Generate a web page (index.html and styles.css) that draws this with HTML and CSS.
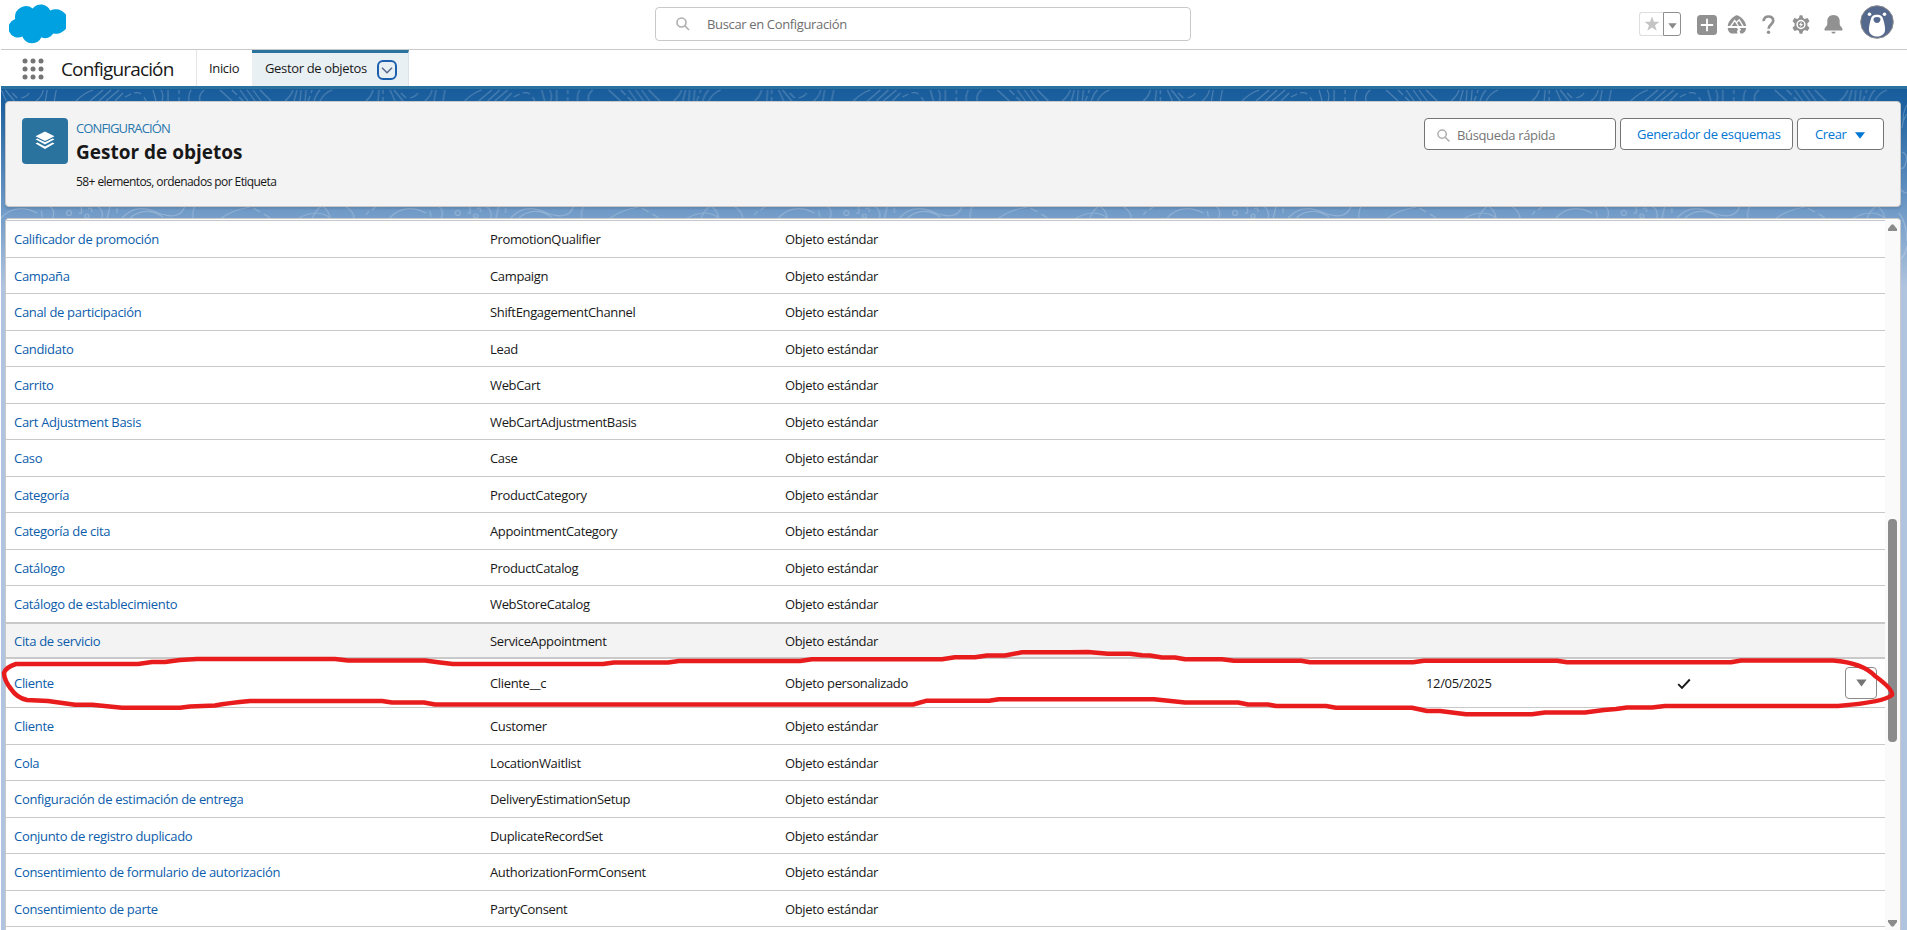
FILE: index.html
```html
<!DOCTYPE html>
<html lang="es">
<head>
<meta charset="utf-8">
<title>Gestor de objetos</title>
<link rel="stylesheet" href="styles.css">
</head>
<body>
<header class="global">
  <svg class="logo" width="57" height="40" viewBox="0 0 57 40"><path fill="#00a1e0" d="M23.7 4.400A10.200 10.200 0 0 1 41.200 6.600A12.300 12.300 0 1 1 44.200 29.600A9 9 0 0 1 32.400 33.300A10.300 10.300 0 0 1 13.400 32.500A9.500 9.500 0 1 1 6.200 15A11 11 0 0 1 23.700 4.400Z"/></svg>
  <div class="search">
    <svg width="14" height="14" viewBox="0 0 14 14" fill="none" stroke="#aeaeae" stroke-width="1.6"><circle cx="5.500" cy="5.500" r="4.500"/><path d="M8.800 8.800L13 13"/></svg>
    <span>Buscar en Configuración</span>
  </div>
  <div class="tools">
    <div class="fav"><span class="star"><svg width="16" height="16" viewBox="0 0 16 16"><path fill="#c4c4c4" d="M8 .5l1.900 5.300h5.600L11 9.200l1.700 5.600L8 11.500l-4.700 3.300L5 9.200.5 5.800h5.600z"/></svg></span><span class="favmenu"><svg width="9" height="6" viewBox="0 0 9 6"><path fill="#8a8a8a" d="M.3.300h8.400L4.500 5.800z"/></svg></span></div>
    <svg class="plus" width="20" height="20" viewBox="0 0 20 20"><rect width="20" height="20" rx="3.500" fill="#919191"/><path d="M10 3.800v12.400M3.800 10h12.400" stroke="#fff" stroke-width="1.800"/></svg>
    <svg class="trail" width="20" height="19" viewBox="0 0 20 19"><path fill="#919191" d="M9.900.2c1.400 0 2.600.9 4.200 2.400 3 2.700 4.700 5.400 5 8.500H.7c.3-3.100 2-5.800 5-8.500C7.300 1.100 8.500.2 9.900.2zM.7 13h8.900l1.800 1.600-1.500 1.400.7 2.600H5.500C2.600 18.600.9 16 .7 13zM12.500 13h6.600c-.2 3-2 5.600-5 5.600h-.6l-.9-2.300 1.500-1.500z"/><path fill="none" stroke="#fff" stroke-width="1.300" d="M3.200 11.800l4.500-6.300 3.600 5.300M9 8l3.200-3.200 4.200 6.800"/></svg>
    <svg class="help" width="13" height="19" viewBox="0 0 13 19"><path fill="none" stroke="#919191" stroke-width="2.700" d="M1.700 6.200C1.500 3 3.700 1.500 6.400 1.500c2.800 0 4.800 1.600 4.800 4.200 0 3.800-4.600 3.700-4.600 8.100"/><circle cx="6.500" cy="17.200" r="1.700" fill="#919191"/></svg>
    <svg class="gear" width="18" height="19" viewBox="0 0 18 19"><path fill="#919191" d="M7.700.3h2.600l.8 2.700 1.600.9 2.900-.9 1.900 3.200-2.100 2.100v2.400l2.100 2.100-1.900 3.200-2.900-.9-1.600.9-.8 2.700H7.700L6.900 16l-1.600-.9-2.900.9-1.900-3.200 2.100-2.100V8.300L.5 6.200 2.400 3l2.900.9L6.900 3z"/><circle cx="9" cy="9.500" r="3.900" fill="none" stroke="#fff" stroke-width="1.500"/><path fill="#fff" d="M9.700 6.400L7 10h1.700l-.6 2.600L11 9.100H9.200z"/></svg>
    <svg class="bell" width="19" height="19" viewBox="0 0 19 19"><path fill="#919191" d="M9.500 0c4 0 6.200 2.800 6.200 6.300v2.400c0 2.600 2.900 3.700 2.900 6.100 0 .5-.3.700-.8.700H1.200c-.5 0-.8-.2-.8-.7 0-2.400 2.900-3.500 2.900-6.100V6.300C3.300 2.800 5.500 0 9.500 0zM7.300 16.700h4.400c-.3 1.200-1.200 1.900-2.200 1.900s-1.900-.7-2.200-1.900z"/></svg>
    <svg class="avatar" width="34" height="34" viewBox="0 0 34 34"><circle cx="17" cy="17" r="16.300" fill="#54698d" stroke="#8c8c8c" stroke-width="1"/><path fill="#fff" d="M11.600 12.300c1-2 3-2.500 5.400-2.500s4.400.5 5.400 2.500c1.200 3 3 9.500 2.600 13.200-.5 4-4.500 6-8 6s-7.500-2-8-6c-.4-3.700 1.400-10.200 2.600-13.200z"/><circle cx="9.500" cy="9.200" r="1.800" fill="#fff"/><circle cx="24.500" cy="9.200" r="1.800" fill="#fff"/><path fill="#54698d" d="M13.500 14.500c0-1.800 1.600-2.500 3.500-2.500s3.500.7 3.500 2.500-1.700 3.600-3.500 3.600-3.500-1.800-3.500-3.600z"/></svg>
  </div>
</header>
<nav class="context">
  <svg class="waffle" width="22" height="22" viewBox="0 0 22 22" fill="#747474"><circle cx="3" cy="3" r="2.500"/><circle cx="11" cy="3" r="2.500"/><circle cx="19" cy="3" r="2.500"/><circle cx="3" cy="11" r="2.500"/><circle cx="11" cy="11" r="2.500"/><circle cx="19" cy="11" r="2.500"/><circle cx="3" cy="19" r="2.500"/><circle cx="11" cy="19" r="2.500"/><circle cx="19" cy="19" r="2.500"/></svg>
  <span class="app">Configuración</span>
  <a class="tab home">Inicio</a>
  <a class="tab active"><span>Gestor de objetos</span><i class="chev"><svg width="12" height="7" viewBox="0 0 12 7"><path d="M1 .8l5 5 5-5" fill="none" stroke="#54698d" stroke-width="1.500"/></svg></i></a>
</nav>
<main class="stage">
  <svg class="topo" width="1906" height="200" fill="none" stroke="#fff" stroke-opacity=".22" stroke-width="1.200">
    <defs>
      <pattern id="contours" x="59" y="0" width="388.700" height="200" patternUnits="userSpaceOnUse">
        <path d="M16 12Q24 4 33 1M30 12L43 1M39 12L51 1M46 12L59 1M55 12L63 4M65 8l6-3M74 4q5-1 7 1M84 8l2 4M93 1l3 11M101 1q3 5 1 11M108 1v11M119 1v4M119 8v4M131 1q-3 5-2 11M144 1q-6 5-4 11M160 1l12 11M172 1l5 5M179 8l4 4M180 1l8 11M187 1l8 11M193 1l8 11M200 1l11 11M233 1q-2 6-8 11M237 1l-3 11M241 1l-1 11M246 1l-1 11M252 1l-1 3M250 7l-2 5M260 1q-4 4-6 11M272 1q-8 3-12 11M313 1q-2 7-7 11M319 1l-1 11M323 1v4M323 8v4M330 1l5 11M334 1l9 11M341 4l5 5M350 9q5-1 8-5M372 1q-1 6-7 11M376 1l-2 11M385 1q-1 5-2 11"/>
        <path d="M37 117q7 4 5 13M50 117l-3 13M57 119v5M62 129Q76 113 98 124Q120 132 125 117M69 130Q84 116 103 128M135 117q-3 6-2 13M160 130Q172 121 190 118M193 119l7 4M204 125l6 4M237 130Q258 118 271 130M252 130q4-10 10-13q7 4 8 13M285 117q9 5 9 13M306 126l3-4M312 121l5-4M329 130Q343 113 366 124M370 122l1 6M21 118q2 8-2 6M28 120q4-3 4 3M378 117q7 4 3 13"/><circle cx="9" cy="124" r="2.500"/><circle cx="27" cy="127" r="2"/>
      </pattern>
    </defs>
    <rect width="1898" height="200" fill="url(#contours)" stroke="none"/>
    <path d="M1906 16q-4 6-4 16M1906 25q-4 5-5 14M1901 63q6 2 4 10t-5 6M1900 101q3 3 6 3M1898 124q7 8 8 28M1906 157q-1 8-6 13"/>
  </svg>
  <section class="pagehead">
    <div class="badge"><svg width="22" height="22" viewBox="0 0 22 22" fill="#fff"><path d="M11 1.500l9.500 4.800L11 11 1.500 6.300z"/><path d="M1.500 9.300l1.900-.9L11 12.200l7.600-3.800 1.900.9L11 14.600zM1.500 13.500l1.900-.9L11 16.400l7.600-3.800 1.900.9L11 18.900z"/></svg></div>
    <div class="titles"><p class="kicker">CONFIGURACIÓN</p><h1>Gestor de objetos</h1><p class="meta">58+ elementos, ordenados por Etiqueta</p></div>
    <div class="actions">
      <div class="quick"><svg width="13" height="13" viewBox="0 0 14 14" fill="none" stroke="#aeaeae" stroke-width="1.600"><circle cx="5.500" cy="5.500" r="4.500"/><path d="M8.800 8.800L13.300 13.300"/></svg><span>Búsqueda rápida</span></div>
      <a class="btn schema">Generador de esquemas</a>
      <a class="btn create"><span>Crear</span><svg width="10" height="7" viewBox="0 0 10 7"><path fill="#0176d3" d="M0 .3h10L5 6.800z"/></svg></a>
    </div>
  </section>
  <section class="list">
    <div class="rows">
      <div class="row"><a>Calificador de promoción</a><span>PromotionQualifier</span><span>Objeto estándar</span></div>
      <div class="row"><a>Campaña</a><span>Campaign</span><span>Objeto estándar</span></div>
      <div class="row"><a>Canal de participación</a><span>ShiftEngagementChannel</span><span>Objeto estándar</span></div>
      <div class="row"><a>Candidato</a><span>Lead</span><span>Objeto estándar</span></div>
      <div class="row"><a>Carrito</a><span>WebCart</span><span>Objeto estándar</span></div>
      <div class="row"><a>Cart Adjustment Basis</a><span>WebCartAdjustmentBasis</span><span>Objeto estándar</span></div>
      <div class="row"><a>Caso</a><span>Case</span><span>Objeto estándar</span></div>
      <div class="row"><a>Categoría</a><span>ProductCategory</span><span>Objeto estándar</span></div>
      <div class="row"><a>Categoría de cita</a><span>AppointmentCategory</span><span>Objeto estándar</span></div>
      <div class="row"><a>Catálogo</a><span>ProductCatalog</span><span>Objeto estándar</span></div>
      <div class="row"><a>Catálogo de establecimiento</a><span>WebStoreCatalog</span><span>Objeto estándar</span></div>
      <div class="row hover"><a>Cita de servicio</a><span>ServiceAppointment</span><span>Objeto estándar</span></div>
      <div class="row custom"><a>Cliente</a><span>Cliente__c</span><span>Objeto personalizado</span><span>12/05/2025</span><span class="check"><svg width="14" height="12" viewBox="0 0 14 12"><path d="M1.200 6.200l3.800 3.800L12.800 1.500" fill="none" stroke="#181818" stroke-width="1.900"/></svg></span><span class="rowmenu"><svg width="11" height="8" viewBox="0 0 11 8"><path fill="#747474" d="M.3.500h10.400L5.500 7.500z"/></svg></span></div>
      <div class="row"><a>Cliente</a><span>Customer</span><span>Objeto estándar</span></div>
      <div class="row"><a>Cola</a><span>LocationWaitlist</span><span>Objeto estándar</span></div>
      <div class="row"><a>Configuración de estimación de entrega</a><span>DeliveryEstimationSetup</span><span>Objeto estándar</span></div>
      <div class="row"><a>Conjunto de registro duplicado</a><span>DuplicateRecordSet</span><span>Objeto estándar</span></div>
      <div class="row"><a>Consentimiento de formulario de autorización</a><span>AuthorizationFormConsent</span><span>Objeto estándar</span></div>
      <div class="row"><a>Consentimiento de parte</a><span>PartyConsent</span><span>Objeto estándar</span></div>
      <div class="row"></div>
    </div>
    <div class="scroll">
      <svg width="9" height="7" viewBox="0 0 9 7"><path fill="#8b8b8b" d="M3.500.4h2L9 5v2H0V5z"/></svg>
      <div class="thumb"></div>
      <svg width="9" height="7" viewBox="0 0 9 7"><path fill="#8b8b8b" d="M3.500 6.600h2L9 2V0H0v2z"/></svg>
    </div>
  </section>
</main>
<svg class="marker" width="1907" height="930" fill="none" stroke="#e81c1c" stroke-width="4.500" stroke-linejoin="round"><path d="M16 664H138L152 662H165L180 660L197 659H335L348 660.500H425L440 662.500L453 664H603L614 662.500H668L679 661H800L812 659.300H942L955 657.300H975L987 655.500H1005L1022 652.300H1070L1088 652L1108 653.700H1130L1142 655.300L1150 655.500L1162 657.500H1175L1185 659.300H1222L1234 660.700H1301L1310 662.300H1413L1424 660.700H1557L1567 662.300H1731L1741 660.500H1833Q1863 663 1875 676Q1893 689 1892 695Q1885 702 1838 706H1665L1652 707.500H1627L1616 709L1604 710L1585 712.500H1545L1532 714.300H1466L1440 711H1427L1412 707.700H1336L1326 706H1276L1268 704.500H1248L1238 702.500H1185L1154 699.200H999L989 700.800H926L913 704.500H435L424 702.500H392L382 701H250Q228 703 215 705.500L190 706.500L180 707.700H122L92 704.700H75L48 701L27 700Q17 698 11 689Q4 680 4 673Q6 667 16 664Z"/></svg>
</body>
</html>
```

FILE: styles.css
```css
* { box-sizing: border-box; }
body {
  margin: 0;
  width: 1907px;
  height: 930px;
  overflow: hidden;
  display: flex;
  flex-direction: column;
  background: #fff;
  color: #181818;
  font: 13px/20px "Open Sans", "Noto Sans", sans-serif;
  letter-spacing: -0.35px;
}
svg { display: block; flex: none; }
p, h1 { margin: 0; }
span, a { white-space: nowrap; }

.global {
  height: 50px;
  flex: none;
  margin-left: 1px;
  padding-left: 8px;
  display: grid;
  grid-template-columns: 646px 536px 1fr;
  border-bottom: 1px solid #c9c9c9;
}
.logo { margin-top: 4px; }
.search {
  height: 34px;
  margin-top: 7px;
  padding-left: 20px;
  display: flex;
  align-items: center;
  gap: 17px;
  border: 1px solid #c9c9c9;
  border-radius: 4px;
  color: #6e6e6e;
}
.tools {
  display: flex;
  align-items: flex-start;
  padding-left: 448px;
}
.fav { display: flex; margin-top: 12px; }
.star, .favmenu { height: 24px; display: flex; align-items: center; justify-content: center; }
.star { width: 24px; border: 1px solid #dedede; border-radius: 3px 0 0 3px; border-right: 0; }
.favmenu { width: 18px; border: 1px solid #8f8f8f; border-radius: 0 3px 3px 0; padding-top: 3px; }
.plus { margin: 15px 0 0 16px; }
.trail { margin: 15px 0 0 10px; }
.help { margin: 15px 0 0 15px; }
.gear { margin: 15px 0 0 17px; }
.bell { margin: 15px 0 0 14px; }
.avatar { margin: 5px 0 0 17px; }

.context {
  height: 39px;
  flex: none;
  margin-left: 1px;
  padding-left: 21px;
  display: flex;
  border-bottom: 3px solid #2a739e;
}
.waffle { margin-top: 8px; }
.app {
  width: 152px;
  padding: 5px 0 0 17px;
  font-size: 19px;
  line-height: 28px;
  letter-spacing: -0.85px;
}
.tab { display: flex; border-left: 1px solid #e5e5e5; }
.home { width: 56px; padding: 8px 0 0 12px; }
.active {
  width: 157px;
  padding: 5px 0 0 13px;
  gap: 10px;
  background: #e9f0f4;
  border-top: 3px solid #2a739e;
  border-right: 1px solid #dde3e8;
  border-left: 0;
}
.chev {
  width: 20px;
  height: 20px;
  margin-top: 2px;
  display: flex;
  align-items: center;
  justify-content: center;
  border: 2px solid #1b5fae;
  border-radius: 6px;
}

.stage {
  flex: 1;
  min-height: 0;
  margin-left: 1px;
  padding: 12px 6px 0 4px;
  display: flex;
  flex-direction: column;
  gap: 11px;
  position: relative;
  background: #b0c4df linear-gradient(#195c9c 0, #1b609f 12px, #6d98c6 118px, #b0c4df 198px) no-repeat;
}
.topo { position: absolute; left: 0; top: 0; }
.pagehead, .list {
  position: relative;
  border: 1px solid #c9c9c9;
  border-radius: 4px;
}
.pagehead {
  height: 106px;
  flex: none;
  padding: 16px 16px 0;
  display: flex;
  background: #f3f3f3;
  box-shadow: 0 2px 2px rgba(0, 0, 0, 0.1);
}
.badge {
  width: 46px;
  height: 46px;
  display: flex;
  align-items: center;
  justify-content: center;
  border-radius: 4px;
  background: #2a739e;
}
.titles { margin-left: 8px; flex: 1; }
.kicker { color: #2a78ad; letter-spacing: -0.88px; }
h1 { font-size: 19px; line-height: 28px; font-weight: 700; letter-spacing: 0; }
.meta { margin-top: 7px; font-size: 12px; line-height: 18px; letter-spacing: -0.57px; }
.actions { display: flex; gap: 4px; align-items: flex-start; }
.quick, .btn {
  height: 32px;
  display: flex;
  align-items: center;
  border: 1px solid #747474;
  border-radius: 4px;
  background: #fff;
}
.quick { width: 192px; padding: 2px 0 0 12px; gap: 7px; color: #757575; }
.btn { color: #0176d3; padding-left: 16px; }
.schema { width: 173px; letter-spacing: -0.3px; }
.create { width: 87px; padding-left: 17px; gap: 8px; }
.create svg { margin-top: 3px; }

.list {
  flex: 1;
  min-height: 0;
  display: flex;
  background: #fff;
  border-bottom: 0;
  border-radius: 4px 4px 0 0;
  overflow: hidden;
  padding-top: 1px;
}
.rows { flex: 1; }
.row {
  height: 37px;
  padding-left: 8px;
  display: grid;
  grid-template-columns: 476px 295px 641px 251px 168px 32px;
  align-items: center;
  border-top: 1px solid #c9c9c9;
}
.row:nth-child(2n) { height: 36px; }
.row a { color: #0b5cab; letter-spacing: -0.31px; }
.row.hover {
  height: 37px;
  background: #f3f3f3;
  border-top: 2px solid #c9c9c9;
  border-bottom: 2px solid #c9c9c9;
}
.row.custom { height: 48px; border-top: 0; }
.row.custom ~ .row:nth-child(2n) { height: 37px; }
.row.custom ~ .row:nth-child(2n + 1) { height: 36px; }
.check { padding-top: 2px; }
.rowmenu {
  width: 32px;
  height: 32px;
  display: flex;
  align-items: center;
  justify-content: center;
  border: 1px solid #8a8a8a;
  border-radius: 4px;
}
.scroll {
  width: 15px;
  padding: 4px 0 3px;
  display: flex;
  flex-direction: column;
  align-items: center;
  justify-content: space-between;
  background: #fafafa;
}
.thumb { width: 9px; height: 223px; margin-top: 110px; border-radius: 4px; background: #8b8b8b; }
.marker { position: absolute; left: 0; top: 0; pointer-events: none; }
```
